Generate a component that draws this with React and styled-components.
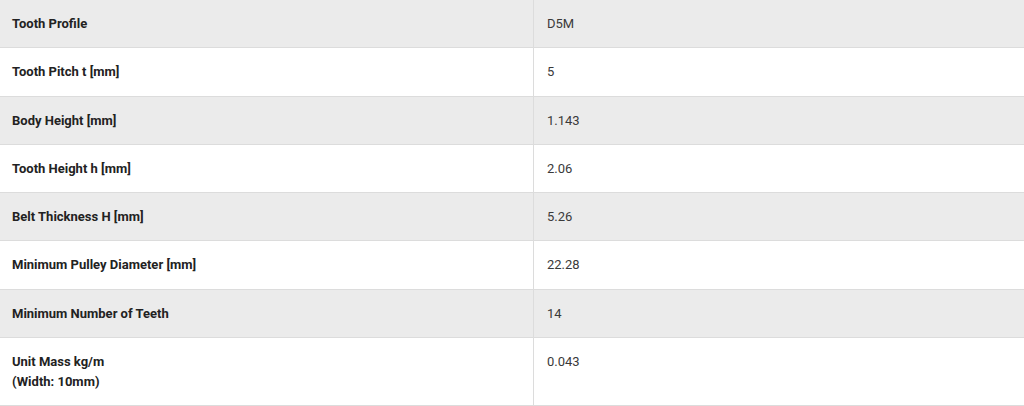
import React from "react";
import styled, { createGlobalStyle } from "styled-components";

const GlobalStyle = createGlobalStyle`
    body {
        margin: 0;
        background: #ffffff;
        font-family: Roboto, "Liberation Sans", sans-serif;
    }
`

const Table = styled.div`
    width: 1024px;
    display: flex;
    flex-direction: column;
`

const Row = styled.div`
    display: grid;
    grid-template-columns: 534px 1fr;
    background: ${props => (props.$shaded ? "#ebebeb" : "#ffffff")};
    border-bottom: 1px solid #dcdcdc;
`

const Label = styled.div`
    padding: 14px 12px 13.8px;
    font-size: 13px;
    line-height: 19.5px;
    font-weight: 700;
    color: #222222;
    border-right: 1px solid #dcdcdc;
`

const Value = styled.div`
    padding: 14px 13px 13.8px;
    font-size: 13px;
    line-height: 19.5px;
    color: #3a3a3a;
`

const rows = [
    ["Tooth Profile", "D5M"],
    ["Tooth Pitch t [mm]", "5"],
    ["Body Height [mm]", "1.143"],
    ["Tooth Height h [mm]", "2.06"],
    ["Belt Thickness H [mm]", "5.26"],
    ["Minimum Pulley Diameter [mm]", "22.28"],
    ["Minimum Number of Teeth", "14"],
    [<>Unit Mass kg/m<br />(Width: 10mm)</>, "0.043"],
]

function App() {
    return (
        <>
            <GlobalStyle />
            <Table>
                {rows.map(([label, value], i) => (
                    <Row key={i} $shaded={i % 2 === 0}>
                        <Label>{label}</Label>
                        <Value>{value}</Value>
                    </Row>
                ))}
            </Table>
        </>
    )
}

export default App
